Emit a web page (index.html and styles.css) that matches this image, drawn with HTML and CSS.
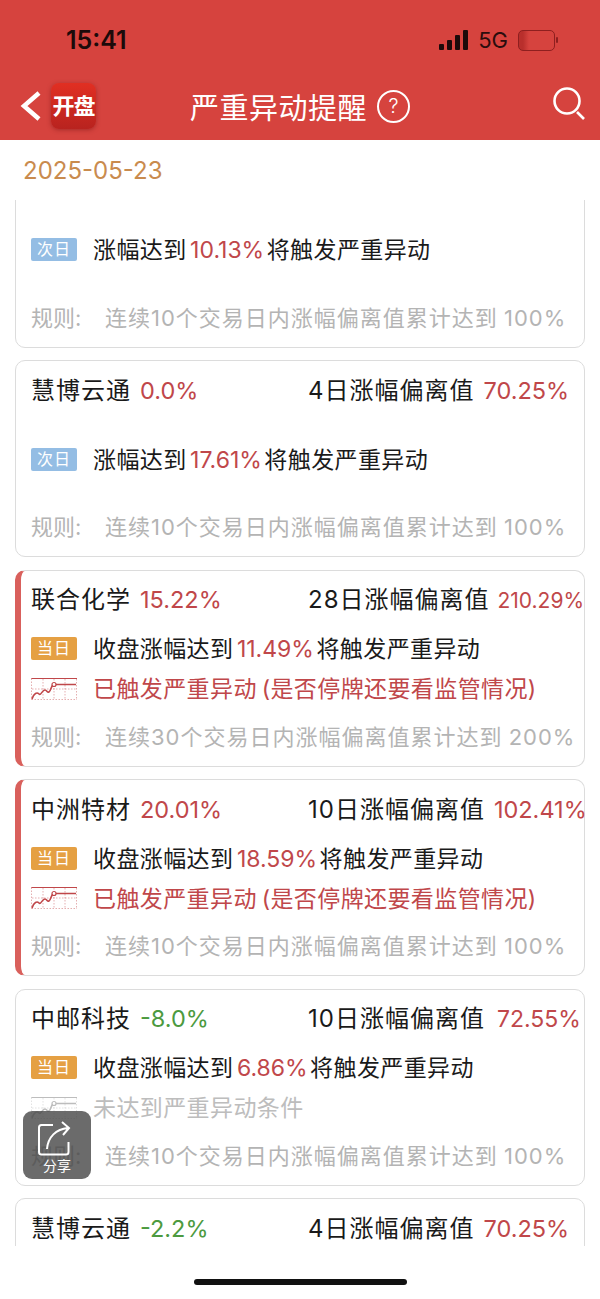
FILE: index.html
```html
<!DOCTYPE html>
<html lang="zh-CN">
<head>
    <meta charset="UTF-8">
    <meta name="viewport" content="width=device-width, initial-scale=1.0">
    <title>严重异动提醒</title>
    <link rel="stylesheet" href="styles.css">
</head>
<body>

<svg width="0" height="0" class="defs">
    <symbol id="chart" viewBox="0 0 46 22">
        <path d="M0.5 0.5H46M0.5 21.5H46M0.5 0.5V22M12 1V21M23 1V21M34 1V21M45.5 1V21M1 11H45" fill="none" stroke="currentColor" stroke-width="0.8" stroke-dasharray="1.5 1.5" opacity="0.55"/>
        <path d="M0.5 0.5H46" fill="none" stroke="currentColor" stroke-width="1"/>
        <path d="M1 21C3 15 6 14 8 16C10 18 11 12 14 12C16 12 16 15 18 14C20 13 20 7 23 6.5H45" fill="none" stroke="currentColor" stroke-width="1.6"/>
        <circle cx="23" cy="6.5" r="2" fill="#fff" stroke="currentColor" stroke-width="1.2"/>
    </symbol>
</svg>

<header class="topbar">
    <div class="status">
        <span class="time">15:41</span>
        <div class="status-right">
            <div class="signal"><i></i><i></i><i></i><i></i></div>
            <span class="net">5G</span>
            <div class="battery"><b></b></div>
        </div>
    </div>
    <nav class="nav">
        <div class="nav-left">
            <svg class="back" width="22" height="30" viewBox="0 0 22 30"><path d="M19 2L4 15L19 28" fill="none" stroke="#fff" stroke-width="4.5"/></svg>
            <div class="logo">开盘</div>
        </div>
        <div class="nav-title">
            <h1>严重异动提醒</h1>
            <span class="help">?</span>
        </div>
        <svg class="search" width="34" height="36" viewBox="0 0 34 36"><circle cx="15" cy="15" r="12.5" fill="none" stroke="#fff" stroke-width="2.6"/><path d="M25 26L32 33" stroke="#fff" stroke-width="2.6"/></svg>
    </nav>
</header>

<div class="date">2025-05-23</div>

<main class="list">
    <section class="card">
        <div class="card-head"></div>
        <div class="card-body">
            <div class="row"><span class="tag tag-next">次日</span><p>涨幅达到<em>10.13%</em>将触发严重异动</p></div>
        </div>
        <div class="rule"><span>规则:</span><p>连续10个交易日内涨幅偏离值累计达到 100%</p></div>
    </section>

    <section class="card">
        <div class="card-head">
            <div class="stock"><strong>慧博云通</strong><em>0.0%</em></div>
            <div class="dev"><strong>4日涨幅偏离值</strong><em>70.25%</em></div>
        </div>
        <div class="card-body">
            <div class="row"><span class="tag tag-next">次日</span><p>涨幅达到<em>17.61%</em>将触发严重异动</p></div>
        </div>
        <div class="rule"><span>规则:</span><p>连续10个交易日内涨幅偏离值累计达到 100%</p></div>
    </section>

    <section class="card card-hit">
        <div class="card-head">
            <div class="stock"><strong>联合化学</strong><em>15.22%</em></div>
            <div class="dev"><strong>28日涨幅偏离值</strong><em class="small">210.29%</em></div>
        </div>
        <div class="card-body">
            <div class="row"><span class="tag tag-today">当日</span><p>收盘涨幅达到<em>11.49%</em>将触发严重异动</p></div>
            <div class="row row-hit"><svg class="chart" width="46" height="22"><use href="#chart"/></svg><p>已触发严重异动 (是否停牌还要看监管情况)</p></div>
        </div>
        <div class="rule"><span>规则:</span><p>连续30个交易日内涨幅偏离值累计达到 200%</p></div>
    </section>

    <section class="card card-hit">
        <div class="card-head">
            <div class="stock"><strong>中洲特材</strong><em>20.01%</em></div>
            <div class="dev"><strong>10日涨幅偏离值</strong><em>102.41%</em></div>
        </div>
        <div class="card-body">
            <div class="row"><span class="tag tag-today">当日</span><p>收盘涨幅达到<em>18.59%</em>将触发严重异动</p></div>
            <div class="row row-hit"><svg class="chart" width="46" height="22"><use href="#chart"/></svg><p>已触发严重异动 (是否停牌还要看监管情况)</p></div>
        </div>
        <div class="rule"><span>规则:</span><p>连续10个交易日内涨幅偏离值累计达到 100%</p></div>
    </section>

    <section class="card">
        <div class="card-head">
            <div class="stock"><strong>中邮科技</strong><em class="down">-8.0%</em></div>
            <div class="dev"><strong>10日涨幅偏离值</strong><em class="wide">72.55%</em></div>
        </div>
        <div class="card-body">
            <div class="row"><span class="tag tag-today">当日</span><p>收盘涨幅达到<em>6.86%</em>将触发严重异动</p></div>
            <div class="row row-miss"><svg class="chart" width="46" height="22"><use href="#chart"/></svg><p>未达到严重异动条件</p></div>
        </div>
        <div class="rule"><span>规则:</span><p>连续10个交易日内涨幅偏离值累计达到 100%</p></div>
    </section>

    <section class="card">
        <div class="card-head">
            <div class="stock"><strong>慧博云通</strong><em class="down">-2.2%</em></div>
            <div class="dev"><strong>4日涨幅偏离值</strong><em>70.25%</em></div>
        </div>
    </section>
</main>

<button class="share" type="button">
    <svg width="38" height="38" viewBox="0 0 38 38"><path d="M15 5H3.5C2 5 1 6 1 7.5V32C1 33.5 2 34.5 3.5 34.5H28C29.5 34.5 30.5 33.5 30.5 32V22" fill="none" stroke="#fff" stroke-width="2"/><path d="M9 29C10 17 18 9 30 8M24 2L31 8L25 15" fill="none" stroke="#fff" stroke-width="2"/></svg>
    <span>分享</span>
</button>

<div class="home-bar"></div>

</body>
</html>
```

FILE: styles.css
```css
* {
    box-sizing: border-box;
}

body {
    margin: 0;
    width: 600px;
    height: 1299px;
    overflow: hidden;
    position: relative;
    background-color: #fff;
    color: #1a1a1a;
    font-family: Inter, "Noto Sans CJK SC", sans-serif;
}

.defs {
    position: absolute;
}

p,
h1 {
    margin: 0;
    font-weight: 400;
}

em {
    font-style: normal;
    color: #c0474a;
    letter-spacing: 0;
}

/* top bar */
.topbar {
    height: 140px;
    background-color: #d6433e;
}

.status {
    height: 80px;
    padding: 0 45px 0 66px;
    display: flex;
    justify-content: space-between;
    align-items: center;
}

.time {
    font-size: 25px;
    font-weight: 600;
    color: #1c0a0a;
}

.status-right {
    display: flex;
    align-items: center;
    gap: 10px;
}

.signal {
    display: flex;
    align-items: flex-end;
    gap: 2.5px;
    height: 20px;
}

.signal i {
    width: 5.5px;
    background-color: #1c0a0a;
    border-radius: 1px;
}

.signal i:nth-child(1) { height: 6px; }
.signal i:nth-child(2) { height: 10px; }
.signal i:nth-child(3) { height: 15px; }
.signal i:nth-child(4) { height: 20px; }

.net {
    font-size: 22px;
    color: #2a0d0d;
}

.battery {
    width: 37px;
    height: 21px;
    border: 1.5px solid #8e1f1f;
    border-radius: 5px;
    position: relative;
    background: linear-gradient(90deg, #b92f2c 0, #b92f2c 4px, transparent 10px);
}

.battery b {
    position: absolute;
    right: -4px;
    top: 6px;
    width: 2px;
    height: 6px;
    background-color: #8e1f1f;
    border-radius: 1px;
}

.nav {
    height: 52px;
    padding: 0 14px 0 20px;
    position: relative;
    display: flex;
    justify-content: space-between;
    align-items: center;
}

.nav-left {
    display: flex;
    align-items: center;
    gap: 9px;
}

.logo {
    width: 45px;
    height: 46px;
    border-radius: 8px;
    background: linear-gradient(#e12f22, #b8231f);
    box-shadow: 0 1px 4px rgba(120, 20, 20, 0.5);
    color: #fff;
    font-size: 22px;
    font-weight: 700;
    line-height: 46px;
    text-align: center;
    white-space: nowrap;
    letter-spacing: -1px;
}

.nav-title {
    position: absolute;
    left: 190px;
    top: 0;
    height: 52px;
    display: flex;
    align-items: center;
    gap: 10px;
    color: #fff;
}

.nav-title h1 {
    font-size: 29px;
    letter-spacing: 0.5px;
    white-space: nowrap;
}

.help {
    width: 33px;
    height: 33px;
    border: 2px solid #fff;
    border-radius: 50%;
    font-size: 20px;
    font-weight: 300;
    line-height: 29px;
    text-align: center;
}

.search {
    margin-top: -4px;
}

.date {
    height: 68px;
    margin-bottom: -8px;
    padding: 0 0 0 23px;
    line-height: 62px;
    font-size: 24px;
    color: #c98b4e;
}

/* card list */
.list {
    height: 1046px;
    overflow: hidden;
    padding: 0 15px;
}

.card {
    height: 197px;
    margin-top: 12.5px;
    padding: 9px 0 0 15px;
    border: 1px solid #dcdcdc;
    border-radius: 10px;
    background-color: #fff;
}

.card:first-child {
    margin-top: -49.5px;
}

.card-hit {
    border-left: 6px solid #d9605c;
    padding-left: 10px;
}

.card-head {
    height: 36px;
    display: grid;
    grid-template-columns: 277px auto;
    align-items: center;
    white-space: nowrap;
    font-size: 24px;
}

.card-head strong {
    font-weight: 400;
    letter-spacing: 1px;
}

.card-head em {
    margin-left: 9px;
    font-size: 23.5px;
}

.dev em.small {
    font-size: 21px;
    margin-left: 8px;
}

.dev em.wide {
    font-size: 23px;
    margin-left: 12px;
}

.card-head em.down {
    color: #4c9a3f;
}

.card-body {
    height: 80px;
    margin-top: 13px;
    display: flex;
    flex-direction: column;
    justify-content: center;
}

.row {
    height: 40px;
    display: flex;
    align-items: center;
    gap: 16px;
    white-space: nowrap;
    font-size: 23px;
}

.row p {
    margin-bottom: 3px;
    letter-spacing: 0.4px;
    word-spacing: -2px;
}

.row em {
    margin: 0 2.5px 0 3.5px;
    font-size: 23px;
}

.tag {
    width: 46px;
    height: 23px;
    border-radius: 2px;
    color: #fff;
    font-size: 16px;
    line-height: 23px;
    text-align: center;
    letter-spacing: 1px;
}

.tag-next {
    background-color: #94bde4;
}

.tag-today {
    background-color: #e5a043;
}

.chart {
    flex: none;
}

.row-hit {
    color: #c0474a;
}

.row-miss {
    color: #bdbdbd;
}

.rule {
    height: 36px;
    margin-top: 8px;
    display: flex;
    align-items: center;
    white-space: nowrap;
    font-size: 22px;
    color: #b4b4b4;
}

.rule span {
    width: 74px;
}

.rule p {
    letter-spacing: 1px;
    word-spacing: -1px;
}

/* floating share */
.share {
    position: absolute;
    left: 23px;
    top: 1111px;
    width: 68px;
    height: 68px;
    padding: 9px 0 0;
    border: none;
    border-radius: 9px;
    background-color: rgba(70, 70, 70, 0.8);
    color: #fff;
    font-family: inherit;
    font-size: 14px;
    display: flex;
    flex-direction: column;
    align-items: center;
}

.share span {
    margin-top: -3px;
}

.home-bar {
    position: absolute;
    left: 194px;
    top: 1279px;
    width: 213px;
    height: 6px;
    border-radius: 3px;
    background-color: #111;
}
```
